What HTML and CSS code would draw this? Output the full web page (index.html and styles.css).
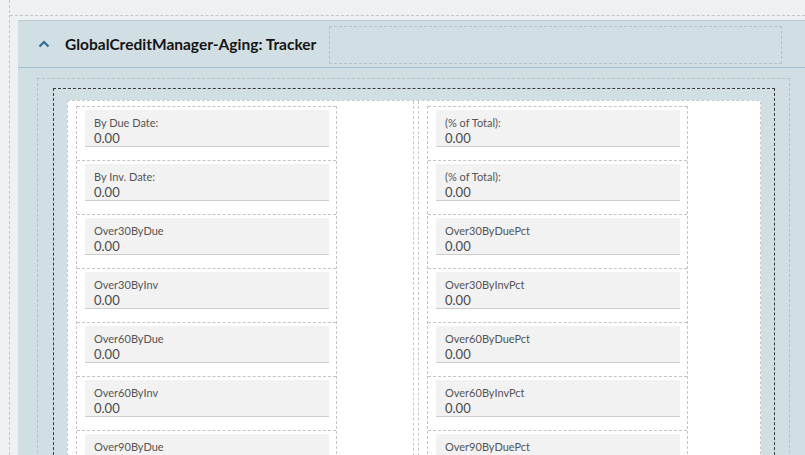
FILE: index.html
```html
<!DOCTYPE html>
<html>
<head>
<meta charset="utf-8">
<link rel="stylesheet" href="styles.css">
</head>
<body>
<div class="outer">
  <div class="inner">
    <div class="panel">
      <div class="panel-header">
        <svg class="chevron" width="12" height="8" viewBox="0 0 12 8"><polyline points="1.5,6.5 6,2 10.5,6.5" fill="none" stroke="#2d6a98" stroke-width="2"/></svg>
        <span class="title">GlobalCreditManager-Aging: Tracker</span>
        <div class="header-slot"></div>
      </div>
      <div class="panel-body">
        <div class="zone">
          <div class="zone-inner">
            <div class="card">
              <div class="sec sec-left">
                <div class="colbox">
                  <div class="cell"><div class="field"><div class="lbl">By Due Date:</div><div class="val">0.00</div></div></div>
                  <div class="cell"><div class="field"><div class="lbl">By Inv. Date:</div><div class="val">0.00</div></div></div>
                  <div class="cell"><div class="field"><div class="lbl">Over30ByDue</div><div class="val">0.00</div></div></div>
                  <div class="cell"><div class="field"><div class="lbl">Over30ByInv</div><div class="val">0.00</div></div></div>
                  <div class="cell"><div class="field"><div class="lbl">Over60ByDue</div><div class="val">0.00</div></div></div>
                  <div class="cell"><div class="field"><div class="lbl">Over60ByInv</div><div class="val">0.00</div></div></div>
                  <div class="cell"><div class="field"><div class="lbl">Over90ByDue</div><div class="val">0.00</div></div></div>
                </div>
              </div>
              <div class="sec sec-right">
                <div class="colbox">
                  <div class="cell"><div class="field"><div class="lbl">(% of Total):</div><div class="val">0.00</div></div></div>
                  <div class="cell"><div class="field"><div class="lbl">(% of Total):</div><div class="val">0.00</div></div></div>
                  <div class="cell"><div class="field"><div class="lbl">Over30ByDuePct</div><div class="val">0.00</div></div></div>
                  <div class="cell"><div class="field"><div class="lbl">Over30ByInvPct</div><div class="val">0.00</div></div></div>
                  <div class="cell"><div class="field"><div class="lbl">Over60ByDuePct</div><div class="val">0.00</div></div></div>
                  <div class="cell"><div class="field"><div class="lbl">Over60ByInvPct</div><div class="val">0.00</div></div></div>
                  <div class="cell"><div class="field"><div class="lbl">Over90ByDuePct</div><div class="val">0.00</div></div></div>
                </div>
              </div>
            </div>
          </div>
        </div>
      </div>
    </div>
  </div>
</div>
</body>
</html>
```
FILE: styles.css
```css
html, body {
  margin: 0;
  padding: 0;
  background: #edf1f4;
  font-family: Lato, "Open Sans", sans-serif;
  overflow: hidden;
}
.outer {
  margin-left: 9px;
  border-left: 1px dashed #c3c7ca;
  height: 455px;
  padding-top: 15px;
  box-sizing: border-box;
  overflow: hidden;
}
.inner {
  border-top: 1px dashed #c3c7ca;
  padding: 4px 0 0 8px;
}
.panel {
  background: #d1dee3;
  border-top: 1px solid #bccad0;
  height: 500px;
}
.panel-header {
  height: 46px;
  border-bottom: 1px solid #9dbfcd;
  display: flex;
  align-items: center;
}
.chevron {
  margin-left: 20px;
  margin-top: -1px;
}
.title {
  margin-left: 15px;
  font-size: 15.5px;
  font-weight: 700;
  color: #151515;
}
.header-slot {
  margin-left: auto;
  margin-right: 23px;
  width: 453px;
  height: 38px;
  box-sizing: border-box;
  border: 1px dashed #b8c2c6;
  margin-top: 2px;
}
.panel-body {
  padding: 10px 15px 0 19px;
}
.zone {
  border: 1px dashed #babfc1;
  border-bottom: none;
  padding: 9px 14px 0 15px;
  height: 400px;
}
.zone-inner {
  border: 1px dashed #3a3a3a;
  border-bottom: none;
  padding: 11px 13px 0 13px;
  height: 390px;
}
.card {
  background: #ffffff;
  border: 1px dashed #c8c8c8;
  border-bottom: none;
  border-top-right-radius: 2px;
  display: flex;
  height: 380px;
}
.sec {
  padding: 5px 0 0 8px;
  box-sizing: border-box;
}
.sec-left {
  width: 346px;
  border-right: 1px dashed #c8c8c8;
}
.sec-right {
  margin-left: 4px;
  border-left: 1px dashed #c8c8c8;
  flex: 1;
}
.colbox {
  width: 261px;
  box-sizing: border-box;
  border-left: 1px dashed #c4c4c4;
  border-right: 1px dashed #c4c4c4;
}
.cell {
  border-top: 1px dashed #c4c4c4;
  padding: 3px 7px 13px 8px;
  height: 37px;
}
.field {
  background: #f2f2f2;
  border-bottom: 1px solid #cccccc;
  padding: 6px 9px 0 9px;
  box-sizing: border-box;
  height: 37px;
}
.lbl {
  font-size: 11px;
  line-height: 14px;
  color: #555555;
}
.val {
  font-size: 13px;
  line-height: 16px;
  color: #4a4a4a;
}
```
